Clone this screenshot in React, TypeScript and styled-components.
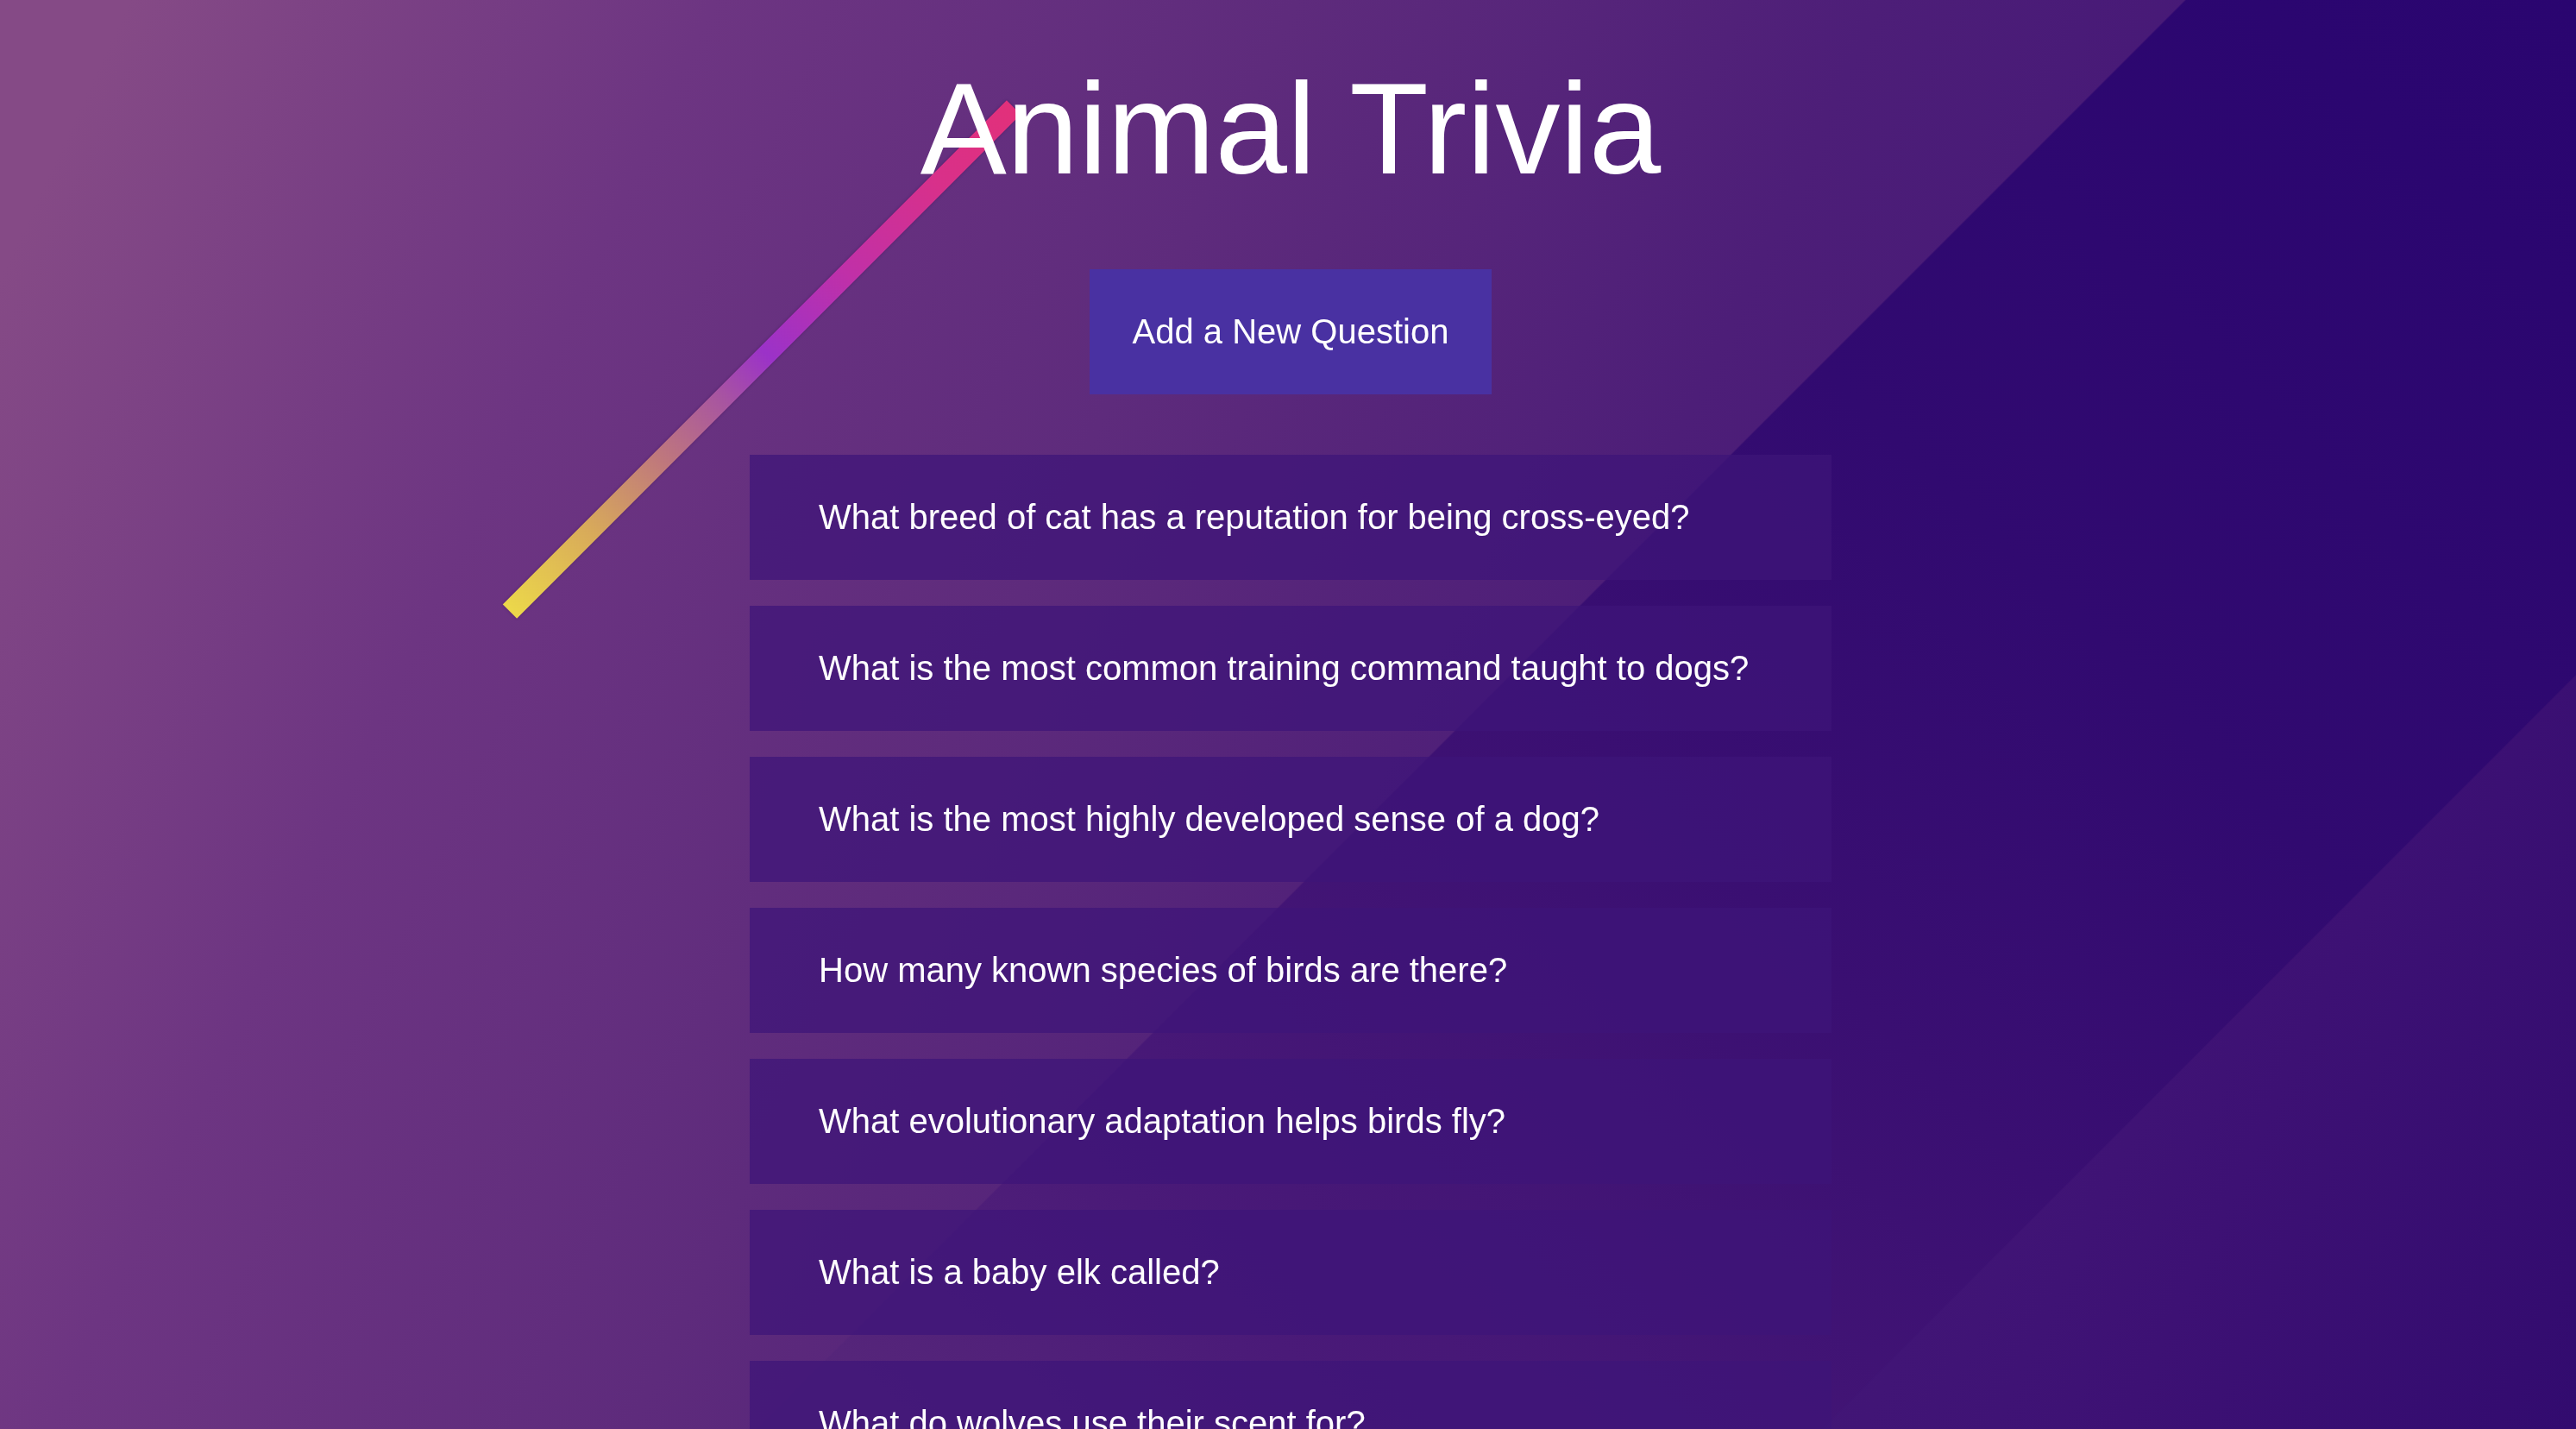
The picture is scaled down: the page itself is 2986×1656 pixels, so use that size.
import React from "react";
import styled, { createGlobalStyle } from "styled-components";

const GlobalStyle = createGlobalStyle`
  html, body {
    margin: 0;
    padding: 0;
  }
  body {
    min-height: 100vh;
    font-family: "Liberation Sans", Arial, Helvetica, sans-serif;
    color: #ffffff;
    background-color: #4d1e78;
    background-image: linear-gradient(
      115deg,
      #854a86 4%,
      #6d3582 22%,
      #5e2b7c 40%,
      #4d1e78 58%,
      #411576 78%,
      #3d1174 86%,
      #320b6f 100%
    );
    background-attachment: fixed;
  }
  body::before {
    content: "";
    position: fixed;
    inset: 0;
    pointer-events: none;
    background-image: linear-gradient(
      45deg,
      #56267a 22%,
      #4a1a78 34%,
      #3a0f72 57%,
      #310a70 72%,
      #2b0670 92%,
      #2a0570 100%
    );
    -webkit-mask-image: linear-gradient(135deg, transparent 54.55%, #000 54.6%, #000 81.15%, transparent 81.2%);
    mask-image: linear-gradient(135deg, transparent 54.55%, #000 54.6%, #000 81.15%, transparent 81.2%);
  }
`;

const Page = styled.main`
  position: relative;
  z-index: 1;
  box-sizing: border-box;
  min-height: 100vh;
  display: flex;
  flex-direction: column;
  align-items: center;
  padding: 62px 0 80px 6px;
`;

const Slash = styled.div`
  position: absolute;
  left: 470px;
  top: 405px;
  width: 826px;
  height: 23px;
  transform: rotate(-45deg);
  transform-origin: center;
  background: linear-gradient(
    90deg,
    #ecd84a 0%,
    #d8aa5a 16%,
    #bf787c 30%,
    #a855a0 42%,
    #9b32c8 51%,
    #c030a8 67%,
    #d8308a 85%,
    #e2307a 100%
  );
  filter: blur(0.7px);
  box-shadow: 0 0 3px rgba(40, 0, 60, 0.35);
`;

const Title = styled.h1`
  position: relative;
  margin: 0;
  font-size: 150px;
  font-weight: 400;
  line-height: 174px;
  color: #ffffff;
`;

const AddButton = styled.button`
  margin-top: 76px;
  height: 145px;
  padding: 0 50px;
  border: none;
  border-radius: 0;
  background: #4931a2;
  color: #ffffff;
  font-family: inherit;
  font-size: 40px;
  cursor: pointer;
`;

const QuestionList = styled.ul`
  list-style: none;
  margin: 70px 0 0;
  padding: 0;
  width: 1254px;
  display: flex;
  flex-direction: column;
  gap: 30px;
`;

const QuestionCard = styled.li`
  padding: 50px 80px;
  background: rgba(62, 20, 120, 0.73);
  font-size: 40px;
  line-height: 45px;
  color: #ffffff;
`;

const questions = [
  "What breed of cat has a reputation for being cross-eyed?",
  "What is the most common training command taught to dogs?",
  "What is the most highly developed sense of a dog?",
  "How many known species of birds are there?",
  "What evolutionary adaptation helps birds fly?",
  "What is a baby elk called?",
  "What do wolves use their scent for?",
];

export default function App() {
  return (
    <>
      <GlobalStyle />
      <Page>
        <Slash aria-hidden="true" />
        <Title>Animal Trivia</Title>
        <AddButton type="button">Add a New Question</AddButton>
        <QuestionList>
          {questions.map((q) => (
            <QuestionCard key={q}>{q}</QuestionCard>
          ))}
        </QuestionList>
      </Page>
    </>
  );
}
